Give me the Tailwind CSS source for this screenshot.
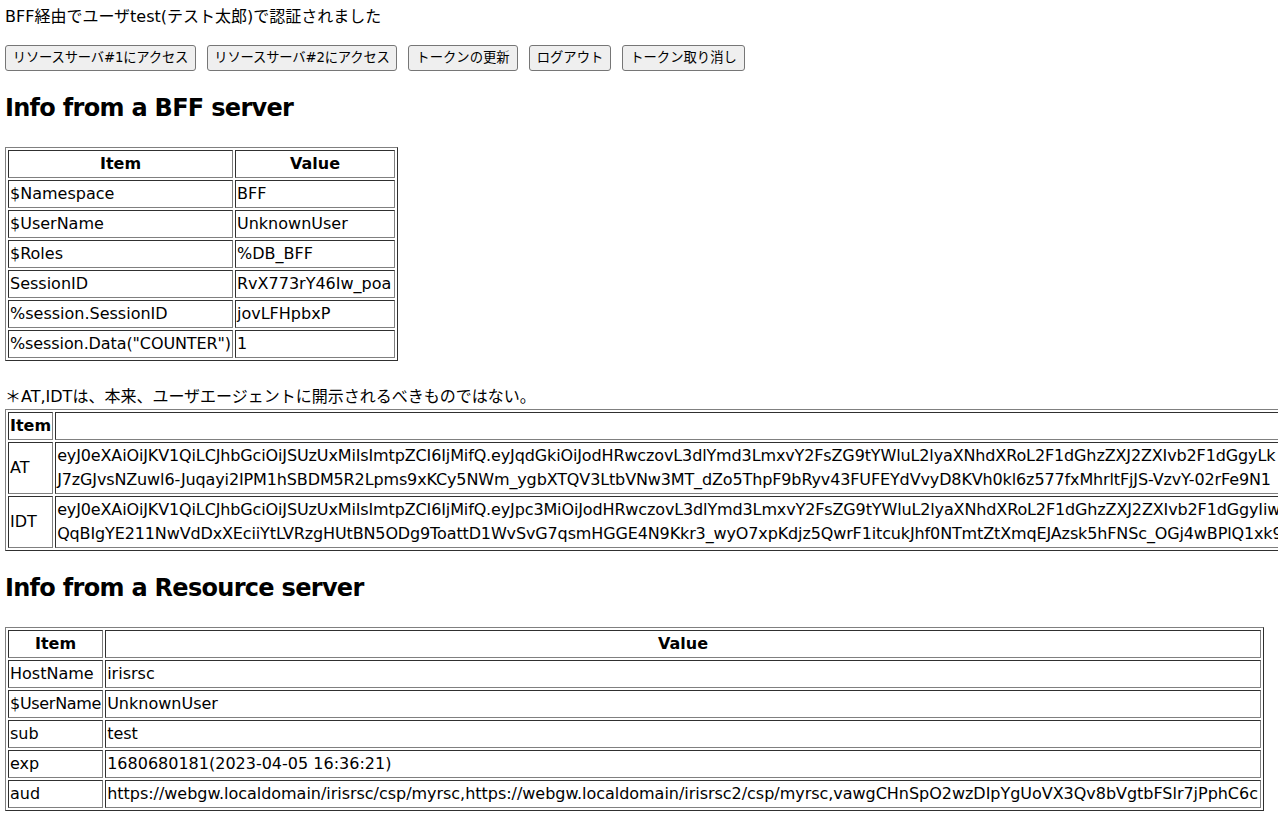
<!DOCTYPE html>
<html lang="ja">
<head>
    <meta charset="UTF-8">
    <title>BFF</title>
    <script src="https://cdn.jsdelivr.net/npm/@tailwindcss/browser@4"></script>
</head>
<body class="bg-white text-black overflow-x-hidden font-['DejaVu_Sans','Noto_Sans_CJK_JP',sans-serif] text-[16px] leading-[24px]">
    <div class="pl-[5px]">
        <p class="pt-[5px]">BFF経由でユーザtest(テスト太郎)で認証されました</p>

        <!-- Buttons -->
        <div class="flex gap-[11px] mt-[16px]">
            <button class="h-[26px] w-[191px] bg-[#efefef] border border-[#767676] rounded-[3px] text-[13.33px] tracking-[-0.2px] leading-none whitespace-nowrap">リソースサーバ#1にアクセス</button>
            <button class="h-[26px] w-[190px] bg-[#efefef] border border-[#767676] rounded-[3px] text-[13.33px] tracking-[-0.2px] leading-none whitespace-nowrap">リソースサーバ#2にアクセス</button>
            <button class="h-[26px] w-[110px] bg-[#efefef] border border-[#767676] rounded-[3px] text-[13.33px] leading-none whitespace-nowrap">トークンの更新</button>
            <button class="h-[26px] w-[82px] bg-[#efefef] border border-[#767676] rounded-[3px] text-[13.33px] leading-none whitespace-nowrap">ログアウト</button>
            <button class="h-[26px] w-[123px] bg-[#efefef] border border-[#767676] rounded-[3px] text-[13.33px] leading-none whitespace-nowrap">トークン取り消し</button>
        </div>

        <!-- BFF -->
        <h2 class="text-[24px] leading-[36px] font-bold tracking-[-0.7px] mt-[19px]">Info from a BFF server</h2>
        <table class="mt-[21px] border-separate border-spacing-[2px] border border-t-[#808080] border-l-[#808080] border-r-[#303030] border-b-[#303030]">
            <tr>
                <th class="w-[225px] h-[28px] p-px border border-t-[#303030] border-l-[#303030] border-r-[#808080] border-b-[#808080] font-bold text-center">Item</th>
                <th class="w-[160px] p-px border border-t-[#303030] border-l-[#303030] border-r-[#808080] border-b-[#808080] font-bold text-center">Value</th>
            </tr>
            <tr>
                <td class="h-[28px] p-px border border-t-[#303030] border-l-[#303030] border-r-[#808080] border-b-[#808080]">$Namespace</td>
                <td class="p-px border border-t-[#303030] border-l-[#303030] border-r-[#808080] border-b-[#808080]">BFF</td>
            </tr>
            <tr>
                <td class="h-[28px] p-px border border-t-[#303030] border-l-[#303030] border-r-[#808080] border-b-[#808080]">$UserName</td>
                <td class="p-px border border-t-[#303030] border-l-[#303030] border-r-[#808080] border-b-[#808080]">UnknownUser</td>
            </tr>
            <tr>
                <td class="h-[28px] p-px border border-t-[#303030] border-l-[#303030] border-r-[#808080] border-b-[#808080]">$Roles</td>
                <td class="p-px border border-t-[#303030] border-l-[#303030] border-r-[#808080] border-b-[#808080]">%DB_BFF</td>
            </tr>
            <tr>
                <td class="h-[28px] p-px border border-t-[#303030] border-l-[#303030] border-r-[#808080] border-b-[#808080]">SessionID</td>
                <td class="p-px border border-t-[#303030] border-l-[#303030] border-r-[#808080] border-b-[#808080]">RvX773rY46Iw_poa</td>
            </tr>
            <tr>
                <td class="h-[28px] p-px border border-t-[#303030] border-l-[#303030] border-r-[#808080] border-b-[#808080]">%session.SessionID</td>
                <td class="p-px border border-t-[#303030] border-l-[#303030] border-r-[#808080] border-b-[#808080]">jovLFHpbxP</td>
            </tr>
            <tr>
                <td class="h-[28px] p-px tracking-[-0.1px] border border-t-[#303030] border-l-[#303030] border-r-[#808080] border-b-[#808080]">%session.Data("COUNTER")</td>
                <td class="p-px border border-t-[#303030] border-l-[#303030] border-r-[#808080] border-b-[#808080]">1</td>
            </tr>
        </table>

        <!-- Tokens -->
        <p class="mt-[24px] whitespace-nowrap">＊AT,IDTは、本来、ユーザエージェントに開示されるべきものではない。</p>
        <table class="border-separate border-spacing-[2px] border border-t-[#808080] border-l-[#808080] border-r-[#303030] border-b-[#303030]">
            <tr>
                <th class="h-[28px] p-px border border-t-[#303030] border-l-[#303030] border-r-[#808080] border-b-[#808080] font-bold text-center">Item</th>
                <th class="p-px border border-t-[#303030] border-l-[#303030] border-r-[#808080] border-b-[#808080] font-bold text-center"></th>
            </tr>
            <tr>
                <td class="p-px border border-t-[#303030] border-l-[#303030] border-r-[#808080] border-b-[#808080]">AT</td>
                <td class="p-px whitespace-nowrap tracking-[-0.13px] border border-t-[#303030] border-l-[#303030] border-r-[#808080] border-b-[#808080]">eyJ0eXAiOiJKV1QiLCJhbGciOiJSUzUxMiIsImtpZCI6IjMifQ.eyJqdGkiOiJodHRwczovL3dlYmd3LmxvY2FsZG9tYWluL2lyaXNhdXRoL2F1dGhzZXJ2ZXIvb2F1dGgyLk<br>J7zGJvsNZuwl6-Juqayi2IPM1hSBDM5R2Lpms9xKCy5NWm_ygbXTQV3LtbVNw3MT_dZo5ThpF9bRyv43FUFEYdVvyD8KVh0kl6z577fxMhrltFjJS-VzvY-02rFe9N1</td>
            </tr>
            <tr>
                <td class="p-px border border-t-[#303030] border-l-[#303030] border-r-[#808080] border-b-[#808080]">IDT</td>
                <td class="p-px whitespace-nowrap tracking-[-0.13px] border border-t-[#303030] border-l-[#303030] border-r-[#808080] border-b-[#808080]">eyJ0eXAiOiJKV1QiLCJhbGciOiJSUzUxMiIsImtpZCI6IjMifQ.eyJpc3MiOiJodHRwczovL3dlYmd3LmxvY2FsZG9tYWluL2lyaXNhdXRoL2F1dGhzZXJ2ZXIvb2F1dGgyIiw<br>QqBIgYE211NwVdDxXEciiYtLVRzgHUtBN5ODg9ToattD1WvSvG7qsmHGGE4N9Kkr3_wyO7xpKdjz5QwrF1itcukJhf0NTmtZtXmqEJAzsk5hFNSc_OGj4wBPlQ1xk9</td>
            </tr>
        </table>

        <!-- Resource server -->
        <h2 class="text-[24px] leading-[36px] font-bold tracking-[-0.7px] mt-[19px]">Info from a Resource server</h2>
        <table class="mt-[21px] w-[1259px] border-separate border-spacing-[2px] border border-t-[#808080] border-l-[#808080] border-r-[#303030] border-b-[#303030]">
            <tr>
                <th class="w-[95px] h-[28px] p-px border border-t-[#303030] border-l-[#303030] border-r-[#808080] border-b-[#808080] font-bold text-center">Item</th>
                <th class="p-px border border-t-[#303030] border-l-[#303030] border-r-[#808080] border-b-[#808080] font-bold text-center">Value</th>
            </tr>
            <tr>
                <td class="h-[28px] p-px border border-t-[#303030] border-l-[#303030] border-r-[#808080] border-b-[#808080]">HostName</td>
                <td class="p-px border border-t-[#303030] border-l-[#303030] border-r-[#808080] border-b-[#808080]">irisrsc</td>
            </tr>
            <tr>
                <td class="h-[28px] p-px tracking-[-0.3px] border border-t-[#303030] border-l-[#303030] border-r-[#808080] border-b-[#808080]">$UserName</td>
                <td class="p-px border border-t-[#303030] border-l-[#303030] border-r-[#808080] border-b-[#808080]">UnknownUser</td>
            </tr>
            <tr>
                <td class="h-[28px] p-px border border-t-[#303030] border-l-[#303030] border-r-[#808080] border-b-[#808080]">sub</td>
                <td class="p-px border border-t-[#303030] border-l-[#303030] border-r-[#808080] border-b-[#808080]">test</td>
            </tr>
            <tr>
                <td class="h-[28px] p-px border border-t-[#303030] border-l-[#303030] border-r-[#808080] border-b-[#808080]">exp</td>
                <td class="p-px border border-t-[#303030] border-l-[#303030] border-r-[#808080] border-b-[#808080]">1680680181(2023-04-05 16:36:21)</td>
            </tr>
            <tr>
                <td class="h-[28px] p-px border border-t-[#303030] border-l-[#303030] border-r-[#808080] border-b-[#808080]">aud</td>
                <td class="p-px whitespace-nowrap tracking-[-0.03px] border border-t-[#303030] border-l-[#303030] border-r-[#808080] border-b-[#808080]">https://webgw.localdomain/irisrsc/csp/myrsc,https://webgw.localdomain/irisrsc2/csp/myrsc,vawgCHnSpO2wzDIpYgUoVX3Qv8bVgtbFSlr7jPphC6c</td>
            </tr>
        </table>
    </div>
</body>
</html>
